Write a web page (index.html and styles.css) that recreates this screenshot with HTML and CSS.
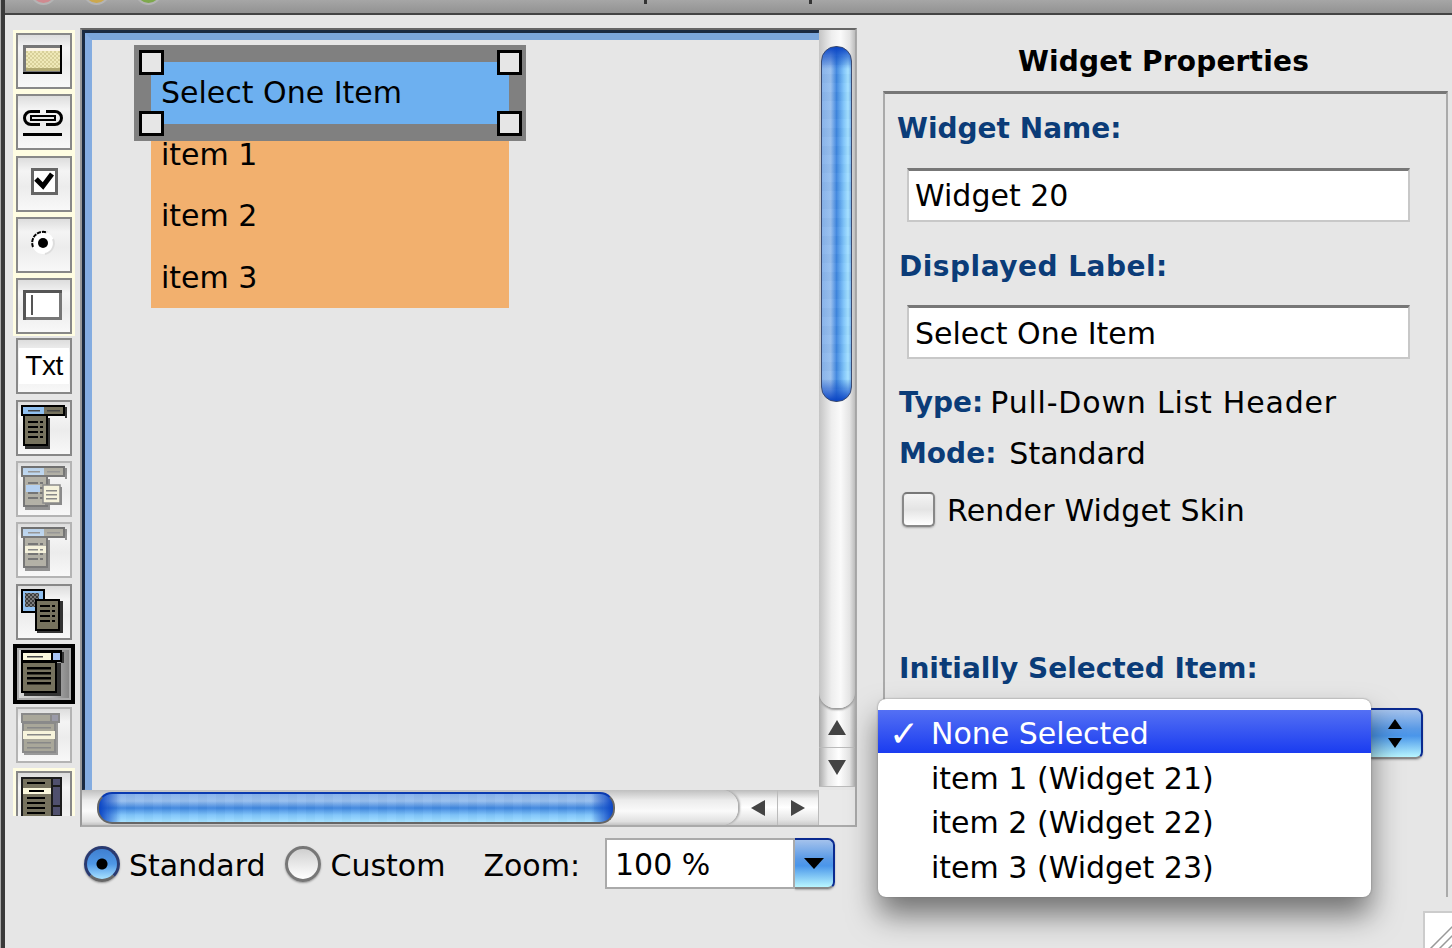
FILE: index.html
```html
<!DOCTYPE html>
<html>
<head>
	<title>Widget Editor</title>
	<link rel="stylesheet" href="styles.css">
</head>
<body>
	<!-- Shared icon parts -->
	<svg class="svg-defs">
		<defs>
			<pattern id="check-yellow" width="4" height="4" patternUnits="userSpaceOnUse">
				<rect width="4" height="4" fill="#efe9b8"/>
				<rect width="2" height="2" fill="#d8d09a"/>
				<rect x="2" y="2" width="2" height="2" fill="#d8d09a"/>
			</pattern>
			<pattern id="check-dark" width="4" height="4" patternUnits="userSpaceOnUse">
				<rect width="4" height="4" fill="#7a7a7a"/>
				<rect width="2" height="2" fill="#3c3c3c"/>
				<rect x="2" y="2" width="2" height="2" fill="#3c3c3c"/>
			</pattern>
			<symbol id="list-lines" viewBox="0 0 16 22">
				<path d="M0 1h10v2H0zM12 1h3v2h-3zM0 6h10v2H0zM12 6h3v2h-3zM0 11h10v2H0zM12 11h3v2h-3zM0 16h10v2H0zM12 16h3v2h-3z" fill="#000"/>
			</symbol>
			<symbol id="menu-base" viewBox="0 0 52 52">
				<rect x="7" y="16" width="25" height="31" fill="#333"/>
				<rect x="47" y="5" width="2" height="11" fill="#333"/>
				<rect x="3" y="3" width="44" height="11" fill="#000"/>
				<rect x="5" y="14" width="25" height="30" fill="#000"/>
				<rect x="5" y="5" width="21" height="7" fill="#90c0f0"/>
				<rect x="26" y="5" width="19" height="7" fill="#76725e"/>
				<rect x="7" y="14" width="21" height="28" fill="#76725e"/>
				<path d="M10 8h12v1.500H10zM29 8h13v1.500H29z" fill="#444"/>
				<use href="#list-lines" x="10" y="18" width="16" height="22"/>
			</symbol>
		</defs>
	</svg>

	<div class="window">
		<div class="titlebar">
			<span class="light light-red"></span>
			<span class="light light-yellow"></span>
			<span class="light light-green"></span>
			<span class="title-mark title-mark-a"></span>
			<span class="title-mark title-mark-b"></span>
		</div>

		<div class="main">
			<!-- Widget palette -->
			<div class="toolbar">
				<div class="tool-group">
					<div class="tool">
						<svg class="icon" viewBox="0 0 52 52">
							<rect x="5" y="10" width="39" height="29" fill="#000"/>
							<rect x="5" y="10" width="37" height="27" fill="#777"/>
							<rect x="8" y="13" width="34" height="23" fill="url(#check-yellow)"/>
							<rect x="8" y="13" width="34" height="3" fill="#fbf4e6"/>
							<rect x="8" y="33" width="34" height="3" fill="#b0a870"/>
						</svg>
					</div>
					<div class="tool">
						<svg class="icon" viewBox="0 0 52 52">
							<path d="M22 15.500H13a6.500 6.500 0 0 0 0 13h9" fill="none" stroke="#000" stroke-width="3"/>
							<path d="M28 15.500h9a6.500 6.500 0 0 1 0 13h-9" fill="none" stroke="#000" stroke-width="3"/>
							<rect x="13" y="20" width="24" height="4" fill="#e8e8e8" stroke="#000" stroke-width="2"/>
							<rect x="5" y="37" width="39" height="3" fill="#000"/>
						</svg>
					</div>
					<div class="tool">
						<svg class="icon" viewBox="0 0 52 52">
							<rect x="14.500" y="11.500" width="24" height="24" fill="#fff" stroke="#666" stroke-width="3"/>
							<path d="M18 21l7 7 9-12" fill="none" stroke="#000" stroke-width="5"/>
						</svg>
					</div>
					<div class="tool">
						<svg class="icon" viewBox="0 0 52 52">
							<circle cx="25" cy="24" r="11" fill="#fff"/>
							<path d="M15 28a11 11 0 0 1 14-14.500" fill="none" stroke="#000" stroke-width="2" stroke-dasharray="4 1"/>
							<path d="M35 20a11 11 0 0 1-8 15" fill="none" stroke="#ddd" stroke-width="2"/>
							<circle cx="25" cy="24" r="5" fill="#000"/>
						</svg>
					</div>
					<div class="tool">
						<svg class="icon" viewBox="0 0 52 52">
							<rect x="5" y="10" width="39" height="30" fill="#777"/>
							<path d="M5 10h39v3H8v27H5z" fill="#555"/>
							<rect x="8" y="13" width="33" height="24" fill="#fff"/>
							<rect x="13" y="15" width="2" height="20" fill="#555"/>
						</svg>
					</div>
				</div>

				<div class="tool tool-plain">
					<span class="tool-txt">Txt</span>
				</div>
				<div class="tool tool-plain">
					<svg class="icon" viewBox="0 0 52 52"><use href="#menu-base"/></svg>
				</div>
				<div class="tool tool-plain tool-off">
					<svg class="icon" viewBox="0 0 52 52">
						<use class="faded" href="#menu-base"/>
						<rect x="8" y="22" width="14" height="7" fill="#b4d0f0"/>
						<rect x="27" y="24" width="17" height="18" fill="#8a8a8a"/>
						<rect x="25" y="22" width="17" height="18" fill="#f5f2dc" stroke="#8a8a8a" stroke-width="1.500"/>
						<path d="M28 27h11v1.500H28zM28 31h11v1.500H28zM28 35h11v1.500H28z" fill="#888"/>
					</svg>
				</div>
				<div class="tool tool-plain tool-off">
					<svg class="icon" viewBox="0 0 52 52">
						<use class="faded" href="#menu-base"/>
						<rect x="7" y="22" width="21" height="7" fill="#f5f2dc"/>
						<path d="M10 25h10v1.500H10zM22 25h3v1.500h-3z" fill="#888"/>
					</svg>
				</div>
				<div class="tool tool-plain">
					<svg class="icon" viewBox="0 0 52 52">
						<rect x="3" y="3" width="24" height="24" fill="#000"/>
						<rect x="5" y="5" width="20" height="20" fill="#90c0f0"/>
						<rect x="7" y="7" width="14" height="14" fill="url(#check-dark)"/>
						<rect x="19" y="15" width="26" height="32" fill="#333"/>
						<rect x="17" y="13" width="25" height="32" fill="#000"/>
						<rect x="19" y="15" width="21" height="28" fill="#76725e"/>
						<use href="#list-lines" x="22" y="18" width="16" height="22"/>
					</svg>
				</div>
				<div class="tool tool-selected">
					<svg class="icon" viewBox="0 0 52 52">
						<rect x="7" y="15" width="37" height="33" fill="#333"/>
						<rect x="44" y="4" width="3" height="11" fill="#333"/>
						<rect x="4" y="2" width="41" height="12" fill="#000"/>
						<rect x="4" y="13" width="36" height="32" fill="#000"/>
						<rect x="6" y="5" width="28" height="7" fill="#fbf8dc"/>
						<rect x="36" y="5" width="7" height="7" fill="#a8c4f4"/>
						<path d="M10 8h16v1.500H10z" fill="#444"/>
						<rect x="6" y="15" width="32" height="28" fill="#76725e"/>
						<path d="M10 19h24v2.500H10zM10 24h24v2.500H10zM10 29h24v2.500H10zM10 34h24v2.500H10z" fill="#000"/>
					</svg>
				</div>
				<div class="tool tool-plain tool-off">
					<svg class="icon" viewBox="0 0 52 52">
						<rect x="6" y="14" width="34" height="32" fill="#999"/>
						<rect x="3" y="4" width="39" height="10" fill="#8a8a8a"/>
						<rect x="5" y="6" width="27" height="6" fill="#a9a79a"/>
						<rect x="34" y="6" width="6" height="6" fill="#9a9aa8"/>
						<rect x="4" y="13" width="34" height="31" fill="#8a8a8a"/>
						<rect x="6" y="15" width="30" height="27" fill="#a9a79a"/>
						<rect x="5" y="22" width="32" height="8" fill="#f7f4dc"/>
						<path d="M9 18h24v1.500H9zM9 25h24v1.500H9zM9 33h24v1.500H9zM9 38h24v1.500H9z" fill="#888"/>
					</svg>
				</div>
				<div class="tool-group tool-group-last">
					<div class="tool tool-cut">
						<svg class="icon" viewBox="0 0 52 52">
							<rect x="3" y="4" width="41" height="48" fill="#1c1c1c"/>
							<rect x="5" y="6" width="28" height="46" fill="#76725e"/>
							<rect x="5" y="15" width="28" height="6" fill="#fbf8dc"/>
							<path d="M9 9h18v2H9zM11 17h15v2H11zM9 24h18v2H9zM9 29h18v2H9zM9 34h18v2H9zM9 39h18v2H9z" fill="#000"/>
							<rect x="35" y="6" width="7" height="6" fill="#50506e"/>
							<rect x="35" y="14" width="7" height="18" fill="#50506e"/>
							<rect x="35" y="34" width="7" height="8" fill="#50506e"/>
						</svg>
					</div>
				</div>
			</div>

			<div class="center">
				<!-- Editing canvas with scroll bars -->
				<div class="pane">
					<div class="frame">
						<div class="canvas">
							<div class="widget">
								<div class="widget-header">
									Select One Item
									<span class="handle handle-tl"></span>
									<span class="handle handle-tr"></span>
									<span class="handle handle-bl"></span>
									<span class="handle handle-br"></span>
								</div>
								<div class="widget-item">item 1</div>
								<div class="widget-item">item 2</div>
								<div class="widget-item">item 3</div>
							</div>
						</div>
					</div>

					<div class="vbar">
						<div class="vtrack"><div class="vthumb"></div></div>
						<div class="vbtn"><span class="arrow arrow-up"></span></div>
						<div class="vbtn vbtn-down"><span class="arrow arrow-down"></span></div>
					</div>

					<div class="hbar">
						<div class="htrack"><div class="hthumb"></div></div>
						<div class="hbtn"><span class="arrow arrow-left"></span></div>
						<div class="hbtn hbtn-right"><span class="arrow arrow-right"></span></div>
					</div>
					<div class="corner"></div>
				</div>

				<div class="mode-row">
					<span class="radio radio-on"></span>
					<span class="mode-label">Standard</span>
					<span class="radio radio-off"></span>
					<span class="mode-label">Custom</span>
					<span class="zoom-label">Zoom:</span>
					<div class="combo">
						<div class="combo-field">100 %</div>
						<div class="aqua-btn combo-btn"><span class="arrow arrow-black"></span></div>
					</div>
				</div>
			</div>

			<!-- Widget Properties -->
			<div class="props">
				<div class="props-title">Widget Properties</div>
				<div class="props-box">
					<div class="prop-label name-label">Widget Name:</div>
					<div class="text-field field-name">Widget 20</div>
					<div class="prop-label shown-label">Displayed Label:</div>
					<div class="text-field field-shown">Select One Item</div>
					<div class="prop-line type-line"><b>Type:</b> <span class="type-value">Pull-Down List Header</span></div>
					<div class="prop-line mode-line"><b>Mode:</b> <span>Standard</span></div>
					<div class="check-row">
						<span class="checkbox"></span>
						<span class="check-label">Render Widget Skin</span>
					</div>
					<div class="prop-label initial-label">Initially Selected Item:</div>
					<div class="select-row">
						<div class="aqua-btn stepper">
							<span class="arrow stepper-up"></span>
							<span class="arrow stepper-down"></span>
						</div>
						<div class="popup">
							<div class="popup-item popup-item-on"><span class="tick">✓</span>None Selected</div>
							<div class="popup-item">item 1 (Widget 21)</div>
							<div class="popup-item">item 2 (Widget 22)</div>
							<div class="popup-item">item 3 (Widget 23)</div>
						</div>
					</div>
				</div>
			</div>
		</div>

		<div class="grip">
			<svg width="29" height="37" viewBox="0 0 29 37">
				<path d="M5 36L29 12M14 36L29 21M23 36L29 30" stroke="#999" stroke-width="1.500" fill="none"/>
			</svg>
		</div>
	</div>
</body>
</html>
```

FILE: styles.css
```css
body {
	margin: 0;
	overflow: hidden;
	background-color: #aaa;
	font-family: "DejaVu Sans", sans-serif;
	font-size: 30px;
	color: #000;
}

.svg-defs {
	display: block;
	width: 0;
	height: 0;
}

.window {
	position: relative;
	box-sizing: border-box;
	width: 1451px;
	height: 948px;
	margin-left: 1px;
	background-color: #e6e6e6;
	border-left: 4px solid #3a3a3a;
	overflow: hidden;
}

/* Title bar, mostly cut off by the crop */
.titlebar {
	display: flex;
	box-sizing: border-box;
	height: 15px;
	padding-left: 25px;
	gap: 25.500px;
	background: linear-gradient(#a6a6a6, #929292);
	border-bottom: 2px solid #444;
	overflow: hidden;
}

.light {
	flex: none;
	width: 27px;
	height: 27px;
	margin-top: -22px;
	border-radius: 50%;
	border: 2px solid #b4b4b4;
	box-sizing: border-box;
}

.light-red {
	background-color: #d08a90;
}

.light-yellow {
	background-color: #cca84e;
}

.light-green {
	background-color: #7ea84c;
}

.title-mark {
	flex: none;
	width: 3px;
	height: 4px;
	background-color: #333;
}

.title-mark-a {
	margin-left: 456px;
}

.title-mark-b {
	margin-left: 137px;
}

.main {
	display: flex;
	padding-left: 8px;
}

/* Palette */
.toolbar {
	flex: none;
	width: 62px;
	height: 786px;
	margin-top: 15px;
	overflow: hidden;
}

.tool-group {
	width: 62px;
	padding: 3px 0 2px;
	margin-bottom: 2px;
	background-color: #fffde2;
}

.tool-group-last {
	margin-bottom: 0;
	margin-top: 1px;
	padding-bottom: 0;
	height: 60px;
}

.tool {
	box-sizing: border-box;
	width: 56px;
	height: 56px;
	margin: 0 3px 5.330px;
	border: 2px solid #888;
	background: linear-gradient(#ddd, #f4f4f4 25%, #ececec 55%, #f8f8f8);
}

.tool-group .tool:last-child {
	margin-bottom: 0;
}

.tool-plain {
	margin-bottom: 5.330px;
}

.tool-off {
	border-color: #b4b4b4;
}

.tool-off .faded {
	opacity: 0.5;
}

.tool-cut {
	height: 60px;
	border-bottom: 0;
}

.tool-selected {
	width: 62px;
	height: 60px;
	margin: -1px 0 3px;
	border: 4px solid #000;
	box-shadow: inset 0 0 0 2px #aaa;
	background: linear-gradient(90deg, #d8d8d8, #bbb 60%, #808080);
}

.icon {
	display: block;
	width: 52px;
	height: 52px;
}

.tool-txt {
	display: block;
	margin: 8px 1px 0;
	height: 36px;
	background-color: #fff;
	font-family: "Liberation Sans", sans-serif;
	font-size: 28px;
	line-height: 36px;
	letter-spacing: -0.500px;
	text-align: center;
}

/* Canvas pane */
.center {
	flex: none;
	width: 777px;
	margin-left: 5px;
	padding-top: 13px;
}

.pane {
	display: grid;
	box-sizing: border-box;
	grid-template-columns: 737px 36px;
	grid-template-rows: 760px 35px;
	width: 777px;
	height: 799px;
	border-top: 2px solid #666;
	border-left: 2px solid #999;
	border-right: 2px solid #aaa;
	border-bottom: 2px solid #aaa;
}

.frame {
	border-top: 3px solid #1a2a40;
	border-left: 3px solid #1a2a40;
}

.canvas {
	position: relative;
	box-sizing: border-box;
	height: 757px;
	border-top: 7px solid #7ba6da;
	border-left: 7px solid #84ace0;
	background-color: #e6e6e6;
}

.widget {
	position: absolute;
	left: 59px;
	top: 22px;
	width: 358px;
}

.widget-header {
	position: relative;
	z-index: 1;
	box-sizing: border-box;
	height: 62px;
	padding-left: 10px;
	line-height: 61px;
	background-color: #6db0f0;
	box-shadow: 0 0 0 17px #808080;
}

.handle {
	position: absolute;
	box-sizing: border-box;
	width: 25px;
	height: 25px;
	background-color: #e6e6e6;
	border: 3px solid #000;
}

.handle-tl {
	left: -12px;
	top: -12px;
}

.handle-tr {
	right: -13px;
	top: -12px;
}

.handle-bl {
	left: -12px;
	bottom: -12px;
}

.handle-br {
	right: -13px;
	bottom: -12px;
}

.widget-item {
	box-sizing: border-box;
	height: 61.330px;
	padding-left: 10px;
	line-height: 61px;
	background-color: #f2b06e;
}

/* Scroll bars */
.vbar {
	display: flex;
	flex-direction: column;
	height: 757px;
	background: linear-gradient(90deg, #aaa, #e8e8e8 25%, #fff 55%, #e4e4e4 85%, #b0b0b0);
}

.vtrack {
	flex: none;
	box-sizing: border-box;
	height: 678px;
	padding: 16px 3px 0 2px;
	border-radius: 0 0 16px 16px;
	box-shadow: 0 2px 2px #999;
	background: linear-gradient(90deg, #c4c4c4, #eee 35%, #fafafa 60%, #e4e4e4 85%, #bdbdbd);
}

.vthumb {
	height: 356px;
	border-radius: 15px;
	border: 1px solid #3a4a70;
	box-sizing: border-box;
	background:
		linear-gradient(#0b45c4, rgba(11, 69, 196, 0) 22px),
		linear-gradient(0deg, #0b45c4, rgba(11, 69, 196, 0) 22px),
		repeating-linear-gradient(rgba(255, 255, 255, 0.03) 0 9px, rgba(0, 0, 0, 0.015) 9px 18px),
		linear-gradient(90deg, #86b2ea, #98bfee 30%, #3f86de 50%, #7fc4fa 75%, #a4e0ff 90%, #78b4ec);
}

.vbtn {
	display: flex;
	flex: none;
	align-items: center;
	justify-content: center;
	height: 40px;
	border-bottom: 1px solid #bbb;
	box-sizing: border-box;
}

.vbtn-down {
	height: 39px;
}

.hbar {
	display: flex;
	height: 35px;
	background: linear-gradient(#bbb, #f0f0f0 25%, #fff 50%, #e4e4e4 85%, #ccc);
}

.htrack {
	flex: none;
	box-sizing: border-box;
	width: 656px;
	padding: 2px 0 0 15px;
	border-radius: 0 16px 16px 0;
	box-shadow: 2px 0 2px #aaa;
	background: linear-gradient(#c0c0c0, #ececec 30%, #fafafa 60%, #e0e0e0 90%, #c4c4c4);
}

.hthumb {
	box-sizing: border-box;
	width: 518px;
	height: 32px;
	border-radius: 15px;
	border: 2px solid #666;
	border-top-color: #0a3ab0;
	background:
		linear-gradient(90deg, #0b45c4, rgba(11, 69, 196, 0) 22px),
		linear-gradient(270deg, #0b45c4, rgba(11, 69, 196, 0) 22px),
		repeating-linear-gradient(90deg, rgba(255, 255, 255, 0.03) 0 9px, rgba(0, 0, 0, 0.015) 9px 18px),
		linear-gradient(#86b2ea, #98bfee 25%, #3f86de 50%, #7fc4fa 75%, #a4e0ff);
}

.hbtn {
	display: flex;
	flex: none;
	align-items: center;
	justify-content: center;
	box-sizing: border-box;
	width: 40px;
	border-right: 1px solid #bbb;
}

.hbtn-right {
	width: 41px;
}

.corner {
	background-color: #e9e9e9;
}

.arrow {
	display: block;
	width: 0;
	height: 0;
	border-style: solid;
	border-color: transparent;
}

.arrow-up {
	border-width: 0 9px 15px;
	border-bottom-color: #444;
}

.arrow-down {
	border-width: 15px 9px 0;
	border-top-color: #444;
}

.arrow-left {
	border-width: 8px 14px 8px 0;
	border-right-color: #444;
}

.arrow-right {
	border-width: 8px 0 8px 14px;
	border-left-color: #444;
}

/* Row under the canvas */
.mode-row {
	display: flex;
	align-items: center;
	height: 51px;
	margin-top: 11px;
	padding-left: 4px;
}

.radio {
	flex: none;
	box-sizing: border-box;
	width: 36px;
	height: 36px;
	border-radius: 50%;
	box-shadow: 0 1px 2px #999;
}

.radio-on {
	border: 3px solid #2a3a70;
	border-bottom-color: #666;
	background:
		radial-gradient(circle at 50% 50%, #000 0 5px, transparent 6px),
		linear-gradient(#3f7fd0, #4f97e6 50%, #a8e2ff);
}

.radio-off {
	margin-left: 20px;
	border: 3px solid #777;
	background: linear-gradient(#cfcfcf, #e8e8e8 50%, #fff);
}

.mode-label {
	margin-left: 9px;
	padding-top: 4px;
}

.zoom-label {
	margin-left: 38px;
	padding-top: 4px;
}

.combo {
	display: flex;
	width: 230px;
	height: 51px;
	margin-left: 25px;
}

.combo-field {
	box-sizing: border-box;
	width: 190px;
	padding-left: 8px;
	line-height: 50px;
	background-color: #fff;
	border: 2px solid #aaa;
}

.aqua-btn {
	box-sizing: border-box;
	border: 2px solid #0a2a90;
	border-left: 0;
	border-bottom-color: #888;
	border-radius: 0 7px 7px 0;
	background: linear-gradient(#a4c2ec, #5a9ae6 40%, #4a96ea 55%, #b8f6ff);
	box-shadow: 0 1px 2px #aaa;
}

.combo-btn {
	display: flex;
	align-items: center;
	justify-content: center;
	width: 40px;
}

.arrow-black {
	border-width: 11px 10px 0;
	border-top-color: #000;
}

/* Properties */
.props {
	flex: none;
	width: 565px;
	margin-left: 26px;
}

.props-title {
	box-sizing: border-box;
	height: 76px;
	padding: 29px 4px 0 0;
	line-height: 36px;
	font-size: 28px;
	font-weight: bold;
	letter-spacing: 0.200px;
	text-align: center;
}

.props-box {
	box-sizing: border-box;
	height: 806px;
	padding: 15px 0 0 14px;
	border-top: 3px solid #777;
	border-left: 2px solid #aaa;
	border-right: 2px solid #aaa;
}

.prop-label {
	height: 36px;
	line-height: 40px;
	font-size: 28px;
	font-weight: bold;
	color: #0b3c78;
}

.name-label {
	margin-left: -2px;
}

.shown-label {
	margin-top: 25px;
	letter-spacing: 0.500px;
}

.initial-label {
	margin-top: 122px;
}

.text-field {
	box-sizing: border-box;
	width: 503px;
	height: 54px;
	margin-left: 8px;
	padding-left: 6px;
	line-height: 50px;
	background-color: #fff;
	border: 2px solid #c8c8c8;
	border-top: 3px solid #777;
}

.field-name {
	margin-top: 23px;
}

.field-shown {
	margin-top: 22px;
	line-height: 52px;
}

.prop-line {
	display: flex;
	height: 36px;
	line-height: 38px;
}

.prop-line b {
	font-size: 28px;
	color: #0b3c78;
}

.type-line {
	margin-top: 25px;
	gap: 7px;
}

.type-value {
	letter-spacing: 0.800px;
}

.mode-line {
	margin-top: 15px;
	gap: 13px;
}

.check-row {
	display: flex;
	align-items: center;
	gap: 12px;
	height: 35px;
	margin: 21px 0 0 3px;
}

.check-label {
	padding-top: 2px;
	letter-spacing: 0.150px;
}

.checkbox {
	flex: none;
	box-sizing: border-box;
	width: 33px;
	height: 35px;
	border: 2px solid #888;
	border-top-color: #777;
	border-radius: 5px;
	background: linear-gradient(#f4f4f4, #e4e4e4 50%, #fff);
	box-shadow: 0 1px 2px #aaa;
}

.select-row {
	position: relative;
	height: 51px;
	margin-top: 23px;
}

.stepper {
	display: flex;
	flex-direction: column;
	align-items: center;
	justify-content: center;
	gap: 9px;
	width: 52px;
	height: 51px;
	margin-left: 472px;
	padding-right: 3px;
}

.stepper-up {
	border-width: 0 7px 10px;
	border-bottom-color: #000;
}

.stepper-down {
	border-width: 10px 7px 0;
	border-top-color: #000;
}

/* Open pop-up menu, lies over the select */
.popup {
	position: absolute;
	left: -21px;
	top: -9px;
	box-sizing: border-box;
	width: 493px;
	height: 198px;
	padding-top: 11px;
	background-color: #fff;
	border-radius: 8px;
	box-shadow: 0 0 2px #777, 0 18px 30px rgba(0, 0, 0, 0.5);
}

.popup-item {
	box-sizing: border-box;
	height: 44.300px;
	padding-left: 53px;
	line-height: 49px;
}

.popup-item-on {
	position: relative;
	height: 43px;
	margin-bottom: 1px;
	line-height: 47px;
	color: #fff;
	background: linear-gradient(#5470f4, #1a3cf0);
}

.tick {
	position: absolute;
	left: 11px;
	font-size: 36px;
	font-weight: bold;
}

.grip {
	position: absolute;
	right: 0;
	bottom: 0;
	box-sizing: border-box;
	width: 29px;
	height: 37px;
	background-color: #fff;
	border-left: 2px solid #ccc;
	border-top: 2px solid #ccc;
}
```
